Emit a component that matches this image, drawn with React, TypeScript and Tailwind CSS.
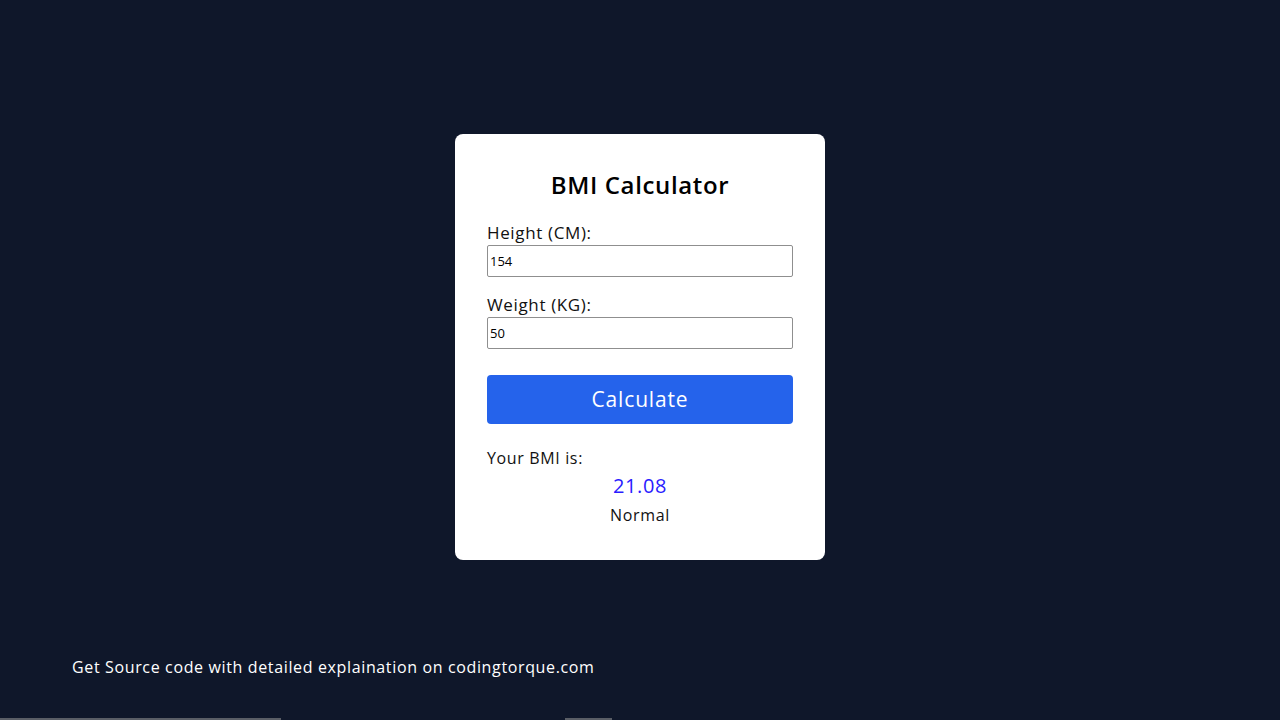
import React, { useState } from 'react';

const font = { fontFamily: '"Open Sans", "Liberation Sans", sans-serif' };

const App: React.FC = () => {
  const [height, setHeight] = useState('154');
  const [weight, setWeight] = useState('50');
  const [bmi, setBmi] = useState('21.08');
  const [status, setStatus] = useState('Normal');

  const calculate = () => {
    const h = parseFloat(height) / 100;
    const w = parseFloat(weight);
    if (!h || !w) return;
    const v = w / (h * h);
    setBmi(v.toFixed(2));
    setStatus(v < 18.5 ? 'Underweight' : v < 25 ? 'Normal' : v < 30 ? 'Overweight' : 'Obese');
  };

  return (
    <div className="relative h-[720px] w-[1280px] overflow-hidden bg-[#0f172a] tracking-[0.04em]" style={font}>
      <div className="flex justify-center pt-[134px]">
        <div className="w-[370px] rounded-lg bg-white px-8 pt-[31px] pb-[31px]">
          <h1 className="text-center text-[24px] font-semibold leading-[40px] text-black">BMI Calculator</h1>

          <label className="mt-[16px] block text-[17px] leading-[24px] text-[#111]">Height (CM):</label>
          <input
            value={height}
            onChange={(e) => setHeight(e.target.value)}
            className="block h-[32px] w-full rounded-[2px] border border-[#8f8f8f] px-[2px] text-[13px] tracking-normal text-black outline-none"
          />

          <label className="mt-[16px] block text-[17px] leading-[24px] text-[#111]">Weight (KG):</label>
          <input
            value={weight}
            onChange={(e) => setWeight(e.target.value)}
            className="block h-[32px] w-full rounded-[2px] border border-[#8f8f8f] px-[2px] text-[13px] tracking-normal text-black outline-none"
          />

          <button
            onClick={calculate}
            className="mt-[26px] block h-[49px] w-full rounded-[4px] bg-[#2563eb] text-[21px] tracking-[0.04em] text-white"
          >
            Calculate
          </button>

          <p className="mt-[22px] text-[16px] leading-[24px] text-[#111]">Your BMI is:</p>
          <p className="mt-[2px] text-center text-[20px] leading-[28px] text-[#2a1cff]">{bmi}</p>
          <p className="mt-[1px] text-center text-[16px] leading-[28px] text-[#111]">{status}</p>
        </div>
      </div>

      <p className="absolute left-[72px] top-[656px] text-[16px] leading-[22px] text-white">
        Get Source code with detailed explaination on codingtorque.com
      </p>

      <div className="absolute bottom-0 left-0 flex h-[2px] w-full">
        <div className="w-[281px] bg-[#5a5e66]" />
        <div className="w-[284px]" />
        <div className="w-[47px] bg-[#5a5e66]" />
      </div>
    </div>
  );
};

export default App;
